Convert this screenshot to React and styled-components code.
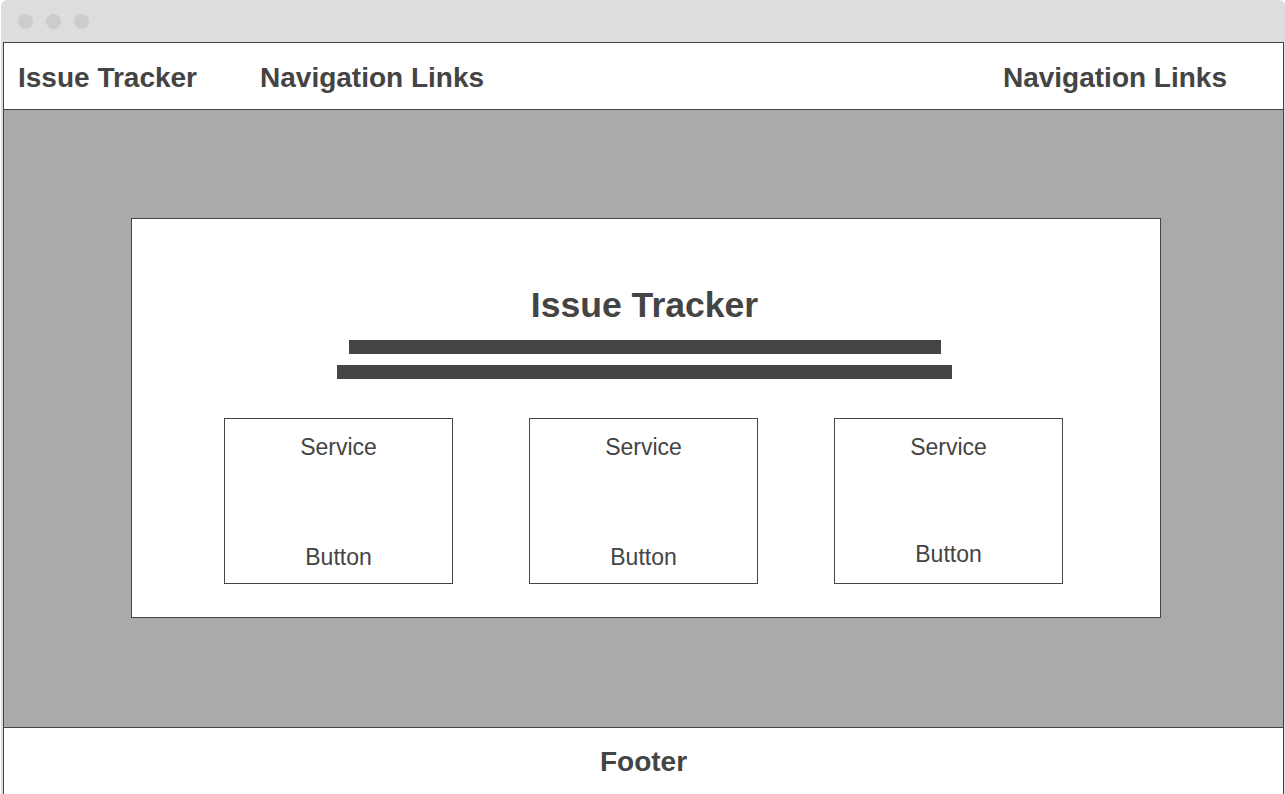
import React from "react";
import styled, { createGlobalStyle } from "styled-components";

const Global = createGlobalStyle`
  html, body { margin: 0; padding: 0; background: #fff; }
  body { font-family: "Liberation Sans", Arial, sans-serif; color: #444; overflow: hidden; }
  * { box-sizing: border-box; }
`;

const Window = styled.div`
  width: 1284px;
  height: 794px;
  margin-left: 1px;
  padding: 0 1px 0 2px;
  background: #dddddd;
  border-radius: 6px 6px 0 0;
  display: flex;
  flex-direction: column;
`;

const TitleBar = styled.div`
  height: 42px;
  flex: none;
  display: flex;
  align-items: center;
  padding-left: 15px;
  gap: 13px;
`;

const Dot = styled.span`
  width: 15px;
  height: 15px;
  border-radius: 50%;
  background: #cccccc;
`;

const Header = styled.header`
  height: 68px;
  flex: none;
  background: #fff;
  border: 1px solid #444;
  display: flex;
  align-items: center;
  padding: 4px 56px 0 14px;
`;

const HeaderText = styled.div`
  font-size: 28px;
  font-weight: 700;
  color: #444;
  margin-left: ${(p) => p.$offset || "0"};
`;

const Main = styled.main`
  height: 617px;
  flex: none;
  background: #aaaaaa;
  border-left: 1px solid #444;
  border-right: 1px solid #444;
  display: flex;
  align-items: center;
  justify-content: center;
  padding: 0 0 2px 4px;
`;

const Card = styled.section`
  width: 1030px;
  height: 400px;
  background: #fff;
  border: 1px solid #444;
  display: flex;
  flex-direction: column;
  align-items: center;
  padding: 65px 2px 0 0;
`;

const Title = styled.h1`
  margin: 0;
  font-size: 35.6px;
  line-height: 42px;
  font-weight: 700;
  color: #444;
`;

const Bar = styled.div`
  width: ${(p) => p.$w}px;
  height: 14px;
  background: #444;
  margin-top: ${(p) => p.$mt}px;
`;

const Row = styled.div`
  display: flex;
  gap: 76px;
  margin: 39px 2px 0 0;
`;

const ServiceBox = styled.div`
  width: 229px;
  height: 166px;
  border: 1px solid #444;
  display: flex;
  flex-direction: column;
  align-items: center;
  justify-content: space-between;
  padding: 14px 0 ${(p) => p.$pb}px;
  font-size: 23px;
  line-height: 28px;
  color: #444;
`;

const Footer = styled.footer`
  height: 68px;
  flex: none;
  background: #fff;
  border: 1px solid #444;
  border-bottom: none;
  display: flex;
  align-items: center;
  justify-content: center;
  font-size: 28px;
  font-weight: 700;
  color: #444;
`;

const services = [{ pb: 12 }, { pb: 12 }, { pb: 15 }];

export default function App() {
  return (
    <>
      <Global />
      <Window>
        <TitleBar>
          <Dot />
          <Dot />
          <Dot />
        </TitleBar>
        <Header>
          <HeaderText>Issue Tracker</HeaderText>
          <HeaderText $offset="63px">Navigation Links</HeaderText>
          <HeaderText $offset="auto">Navigation Links</HeaderText>
        </Header>
        <Main>
          <Card>
            <Title>Issue Tracker</Title>
            <Bar $w={592} $mt={14} />
            <Bar $w={615} $mt={11} />
            <Row>
              {services.map((s, i) => (
                <ServiceBox key={i} $pb={s.pb}>
                  <span>Service</span>
                  <span>Button</span>
                </ServiceBox>
              ))}
            </Row>
          </Card>
        </Main>
        <Footer>Footer</Footer>
      </Window>
    </>
  );
}
